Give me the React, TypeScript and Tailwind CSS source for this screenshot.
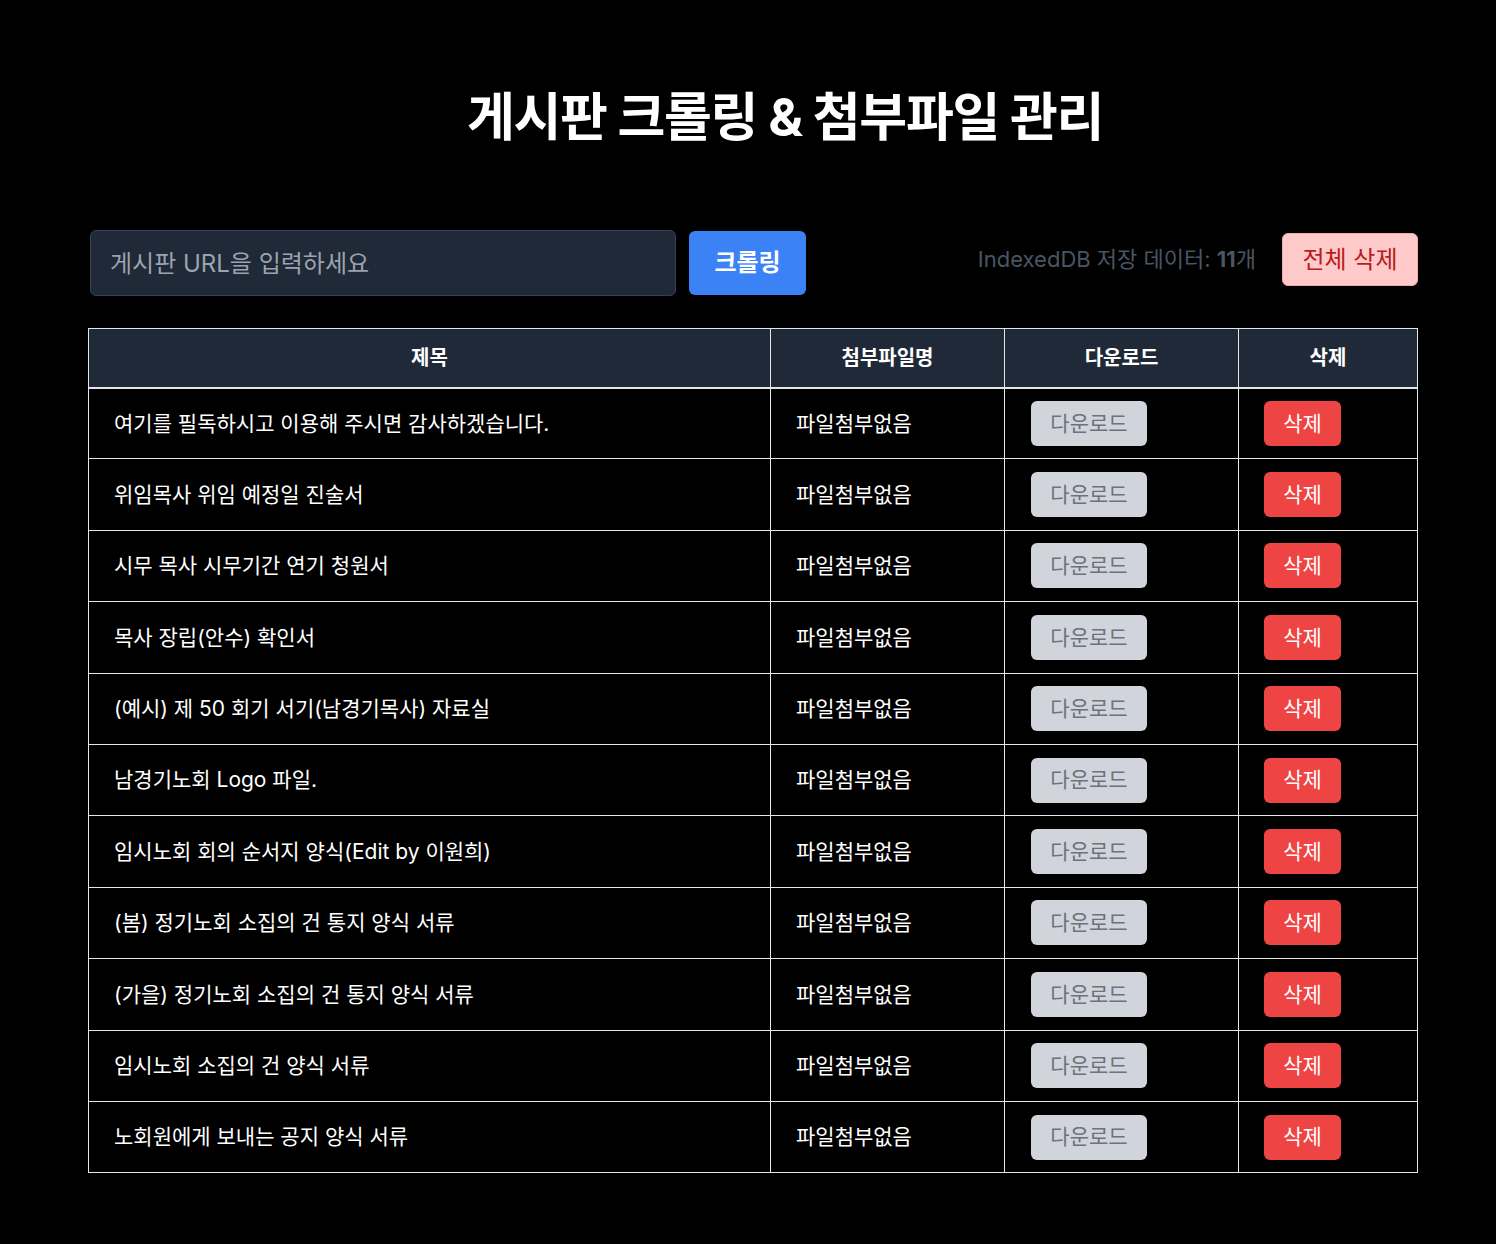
const rows = [
  "여기를 필독하시고 이용해 주시면 감사하겠습니다.",
  "위임목사 위임 예정일 진술서",
  "시무 목사 시무기간 연기 청원서",
  "목사 장립(안수) 확인서",
  "(예시) 제 50 회기 서기(남경기목사) 자료실",
  "남경기노회 Logo 파일.",
  "임시노회 회의 순서지 양식(Edit by 이원희)",
  "(봄) 정기노회 소집의 건 통지 양식 서류",
  "(가을) 정기노회 소집의 건 통지 양식 서류",
  "임시노회 소집의 건 양식 서류",
  "노회원에게 보내는 공지 양식 서류",
];

export default function App() {
  return (
    <div
      className="min-h-[1244px] bg-black text-white"
      style={{ fontFamily: 'Inter, "Noto Sans CJK KR", sans-serif' }}
    >
      <div className="ml-[88px] w-[1330px] pt-[84px]">
        <h1 className="pl-[64px] text-center text-[52px] font-bold leading-[68px] tracking-tight">
          게시판 크롤링 &amp; 첨부파일 관리
        </h1>

        <div className="mt-[78px] flex items-center">
          <input
            className="ml-[2px] h-[66px] w-[586px] rounded-md border border-[#374151] bg-[#1f2937] px-[19px] text-[24px] text-white placeholder:text-[#9ca3af] outline-none"
            placeholder="게시판 URL을 입력하세요"
          />
          <button className="ml-[13px] h-[64px] w-[117px] rounded-md bg-[#3b82f6] text-[24px] font-semibold text-white">
            크롤링
          </button>
          <div className="ml-auto -mt-[7px] flex items-center">
            <div className="text-[22px] text-[#4b5563]">
              IndexedDB 저장 데이터: <span className="font-bold">11</span>개
            </div>
            <button className="ml-[26px] h-[53px] w-[136px] rounded-md border border-[#fca5a5] bg-[#fecaca] text-[24px] text-[#b91c1c]">
              전체 삭제
            </button>
          </div>
        </div>

        <table className="mt-[32px] w-full border-collapse text-[21px]">
          <thead>
            <tr className="h-[59px] bg-[#1f2937] text-[20px]">
              <th className="w-[682px] border border-b-2 border-[#e5e7eb] font-bold">제목</th>
              <th className="w-[234px] border border-b-2 border-[#e5e7eb] font-bold">첨부파일명</th>
              <th className="w-[234px] border border-b-2 border-[#e5e7eb] font-bold">다운로드</th>
              <th className="border border-b-2 border-[#e5e7eb] font-bold">삭제</th>
            </tr>
          </thead>
          <tbody>
            {rows.map((title, i) => (
              <tr key={i} className="h-[71.4px]">
                <td className="border border-[#e5e7eb] pl-[25px]">{title}</td>
                <td className="border border-[#e5e7eb] pl-[25px]">파일첨부없음</td>
                <td className="border border-[#e5e7eb] pl-[26px]">
                  <button className="h-[45px] w-[116px] rounded-md bg-[#d1d5db] text-[21px] text-[#6b7280]">
                    다운로드
                  </button>
                </td>
                <td className="border border-[#e5e7eb] pl-[25px]">
                  <button className="h-[45px] w-[77px] rounded-md bg-[#ef4444] text-[21px] text-white">
                    삭제
                  </button>
                </td>
              </tr>
            ))}
          </tbody>
        </table>
      </div>
    </div>
  );
}
